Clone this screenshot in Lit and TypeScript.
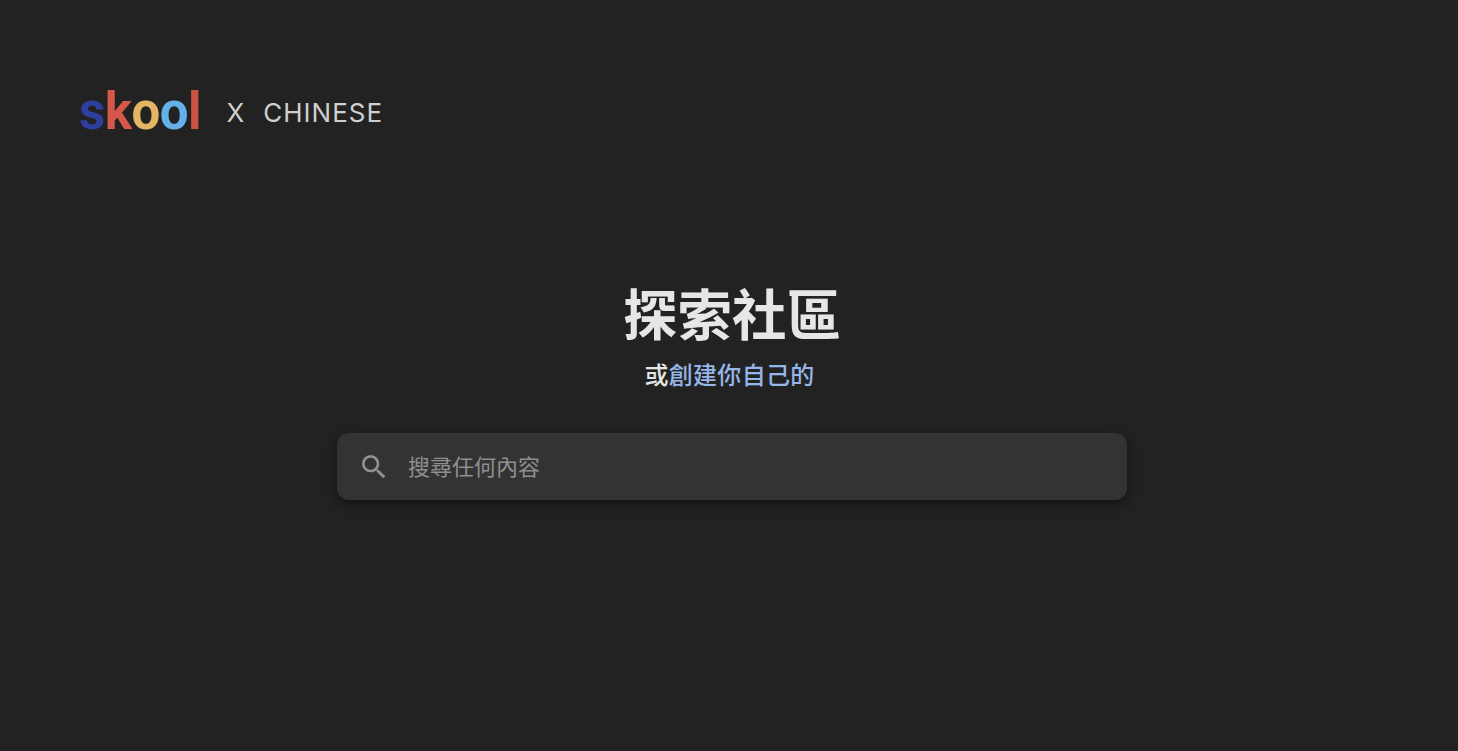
import { LitElement, html, css } from 'lit';
import { customElement } from 'lit/decorators.js';

@customElement('app-root')
export class AppRoot extends LitElement {
  static styles = css`
    :host {
      display: block;
      height: 751px;
      overflow: hidden;
      background: #222222;
      font-family: Inter, 'Noto Sans CJK TC', sans-serif;
    }

    .header {
      display: flex;
      align-items: center;
      height: 60px;
      padding: 82px 0 0 79px;
    }

    .logo {
      display: flex;
      font-family: Roboto, sans-serif;
      font-weight: 700;
      font-size: 51px;
      line-height: 60px;
      letter-spacing: -0.5px;
    }

    .s { color: #2e3f9e; }
    .k { color: #d5584a; }
    .o1 { color: #e5b566; }
    .o2 { color: #64b0e8; }
    .l { color: #cc5244; }

    .tag {
      display: flex;
      gap: 18px;
      margin-left: 25.5px;
      font-size: 26px;
      letter-spacing: 1px;
      color: #cfcfcf;
    }

    .hero {
      display: flex;
      flex-direction: column;
      align-items: center;
      padding: 136px 0 0 6px;
    }

    h1 {
      margin: 0;
      font-family: 'Noto Sans CJK TC', sans-serif;
      font-size: 54.5px;
      line-height: 68px;
      font-weight: 700;
      color: #e6e6e6;
    }

    .sub {
      margin: 11px 5px 0 0;
      font-family: 'Noto Sans CJK TC', sans-serif;
      font-size: 24px;
      font-weight: 500;
      letter-spacing: 0.3px;
      line-height: 34px;
      color: #e6e6e6;
    }

    .sub a {
      color: #94b6e8;
      text-decoration: none;
    }

    .search {
      display: flex;
      align-items: center;
      box-sizing: border-box;
      width: 790px;
      height: 67px;
      margin-top: 42px;
      padding-left: 21px;
      gap: 18px;
      border-radius: 12px;
      background: #333333;
      box-shadow: 0 4px 12px rgba(0, 0, 0, 0.5);
    }

    .search svg {
      width: 32px;
      height: 32px;
      flex: none;
      fill: #929292;
    }

    .placeholder {
      padding-bottom: 4px;
      font-family: 'Noto Sans CJK TC', sans-serif;
      font-size: 22px;
      color: #8f8f8f;
    }
  `;

  render() {
    return html`
      <div class="header">
        <div class="logo">
          <span class="s">s</span><span class="k">k</span><span class="o1">o</span><span class="o2">o</span><span class="l">l</span>
        </div>
        <div class="tag"><span>X</span><span>CHINESE</span></div>
      </div>
      <div class="hero">
        <h1 lang="zh-TW">探索社區</h1>
        <div class="sub" lang="zh-TW">或<a href="#">創建你自己的</a></div>
        <div class="search">
          <svg viewBox="0 0 24 24">
            <path d="M15.5 14h-.79l-.28-.27A6.47 6.47 0 0 0 16 9.5 6.5 6.5 0 1 0 9.5 16c1.61 0 3.09-.59 4.23-1.57l.27.28v.79l5 4.99L20.49 19l-4.99-5zm-6 0C7.01 14 5 11.99 5 9.5S7.01 5 9.5 5 14 7.01 14 9.5 11.99 14 9.5 14z"></path>
          </svg>
          <span class="placeholder" lang="zh-TW">搜尋任何內容</span>
        </div>
      </div>
    `;
  }
}
